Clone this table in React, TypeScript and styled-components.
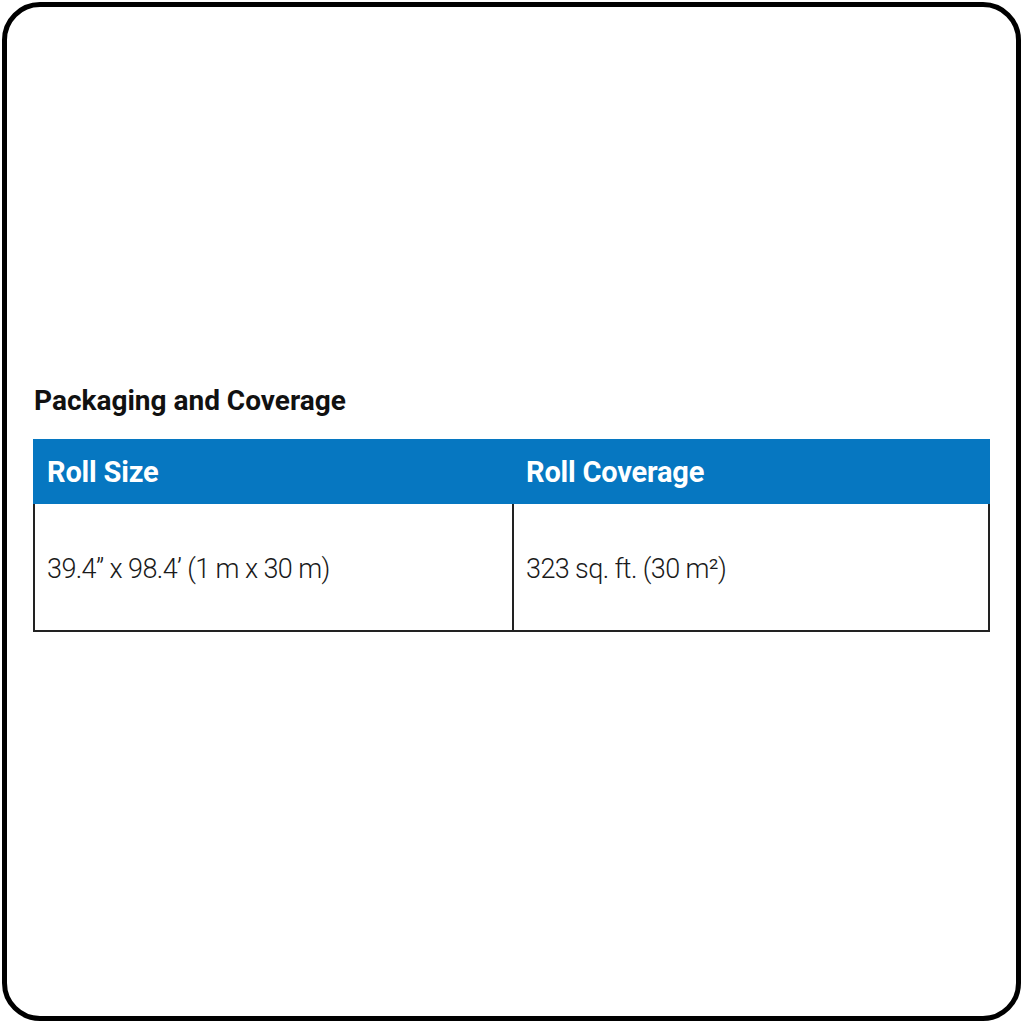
import React from 'react'
import styled, {createGlobalStyle} from 'styled-components'

const GlobalStyle = createGlobalStyle`
  html, body {
    margin: 0;
    padding: 0;
    background: #ffffff;
  }
`

const condensed = `Roboto, "Liberation Sans", sans-serif`

const Page = styled.div`
  width: 1024px;
  height: 1024px;
  box-sizing: border-box;
  padding: 2px 3px 3px 2px;
  background: #ffffff;
`

const Frame = styled.div`
  height: 100%;
  box-sizing: border-box;
  border: 5px solid #000000;
  border-radius: 38px;
  padding: 377px 27px 0 26px;
`

const Title = styled.h2`
  margin: 0 0 21px 1px;
  font-family: ${condensed};
  font-weight: 700;
  font-size: 28px;
  line-height: 34px;
  color: #111111;
`

const Table = styled.div`
  display: grid;
  grid-template-columns: 479px 1fr;
  width: 957px;
`

const HeadCell = styled.div`
  height: 65px;
  background: #0677c1;
  color: #ffffff;
  font-family: ${condensed};
  font-weight: 700;
  font-size: 29px;
  letter-spacing: -0.2px;
  display: flex;
  align-items: center;
  padding-left: 14px;
`

const BodyCell = styled.div<{ $last?: boolean }>`
  height: 128px;
  box-sizing: border-box;
  border-bottom: 2px solid #222222;
  border-left: 2px solid #222222;
  border-right: ${p => (p.$last ? '2px solid #222222' : 'none')};
  color: #1a1a1a;
  font-family: ${condensed};
  font-weight: 300;
  font-size: 27px;
  letter-spacing: -0.6px;
  display: flex;
  align-items: center;
  padding-left: 12px;
  padding-top: 4px;
`

export default function App() {
    return (
        <>
            <GlobalStyle/>
            <Page>
                <Frame>
                    <Title>Packaging and Coverage</Title>
                    <Table>
                        <HeadCell>Roll Size</HeadCell>
                        <HeadCell>Roll Coverage</HeadCell>
                        <BodyCell>39.4” x 98.4’ (1 m x 30 m)</BodyCell>
                        <BodyCell $last>323 sq. ft. (30 m²)</BodyCell>
                    </Table>
                </Frame>
            </Page>
        </>
    )
}
